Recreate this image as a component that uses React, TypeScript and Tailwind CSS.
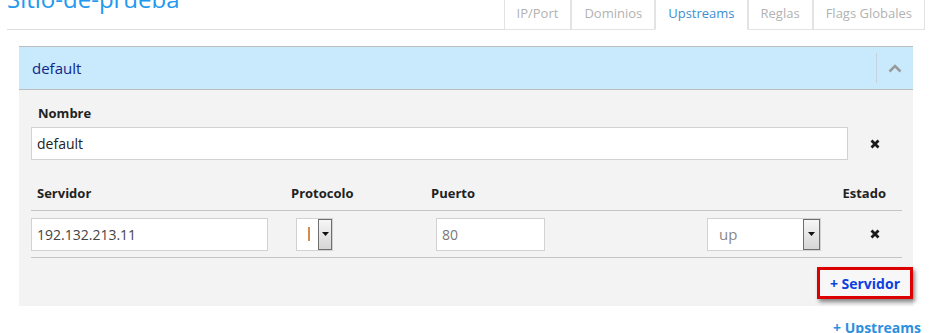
import React from "react";

const font = { fontFamily: '"Open Sans", "Liberation Sans", sans-serif' };

function XIcon() {
  return (
    <svg width="10" height="10" viewBox="0 0 10 10">
      <path d="M1.5 1.5 L8.5 8.5 M8.5 1.5 L1.5 8.5" stroke="#1a1a1a" strokeWidth="2.8" strokeLinecap="butt" />
    </svg>
  );
}

function DropBtn() {
  return (
    <div className="flex h-[31px] w-[17px] items-start justify-center border border-[#6e6e6e] bg-gradient-to-b from-[#f6f6f6] to-[#d6d6d6] pt-[12px]">
      <svg width="7" height="4" viewBox="0 0 7 4">
        <polygon points="0,0 7,0 3.5,4" fill="#111" />
      </svg>
    </div>
  );
}

function Tab({ label, active }: { label: string; active?: boolean }) {
  return (
    <div
      className={
        "mb-[-1px] flex h-[38px] items-center border border-[#e3e3e3] px-[12px] pt-[5px] text-[13px] " +
        (active
          ? "border-b-white bg-white text-[#3d8fd1]"
          : "border-b-[#e3e3e3] text-[#b2b2b2]")
      }
    >
      {label}
    </div>
  );
}

export default function App() {
  return (
    <div className="h-[333px] w-[932px] overflow-hidden bg-white" style={font}>
      <div className="ml-[7px] w-[918px]">
        {/* title + tabs */}
        <div className="flex h-[30px] items-end border-b border-[#dedede]">
          <div className="mb-auto mt-[-16px] text-[24px] leading-[30px] text-[#2299ee]">
            Sitio-de-prueba
          </div>
          <div className="ml-auto flex">
            <Tab label="IP/Port" />
            <Tab label="Dominios" />
            <Tab label="Upstreams" active />
            <Tab label="Reglas" />
            <Tab label="Flags Globales" />
          </div>
        </div>

        {/* panel */}
        <div className="mx-[12px] mt-[16px]">
          <div className="flex h-[44px] items-center border-y border-[#bdbdbd] bg-[#c8eafc]">
            <div className="flex-1 pl-[13px] text-[15px] text-[#10268a]">default</div>
            <div className="h-[30px] w-px bg-[#c3d3de]" />
            <div className="flex w-[36px] justify-center">
              <svg width="14" height="9" viewBox="0 0 14 9">
                <polyline points="1.5,7.5 7,2 12.5,7.5" fill="none" stroke="#9a9a9a" strokeWidth="2.6" />
              </svg>
            </div>
          </div>

          <div className="bg-[#f3f3f3] pb-[7px] pl-[12px] pr-[11px] pt-[14px]">
            <div className="pl-[7px] text-[13px] font-bold leading-[18px] text-[#222]">Nombre</div>
            <div className="mt-[5px] flex items-center">
              <div className="flex h-[33px] flex-1 items-center border border-[#d2d2d2] bg-white pl-[5px] text-[14px] text-[#222]">
                default
              </div>
              <div className="flex w-[54px] justify-center">
                <XIcon />
              </div>
            </div>

            {/* table header */}
            <div className="mt-[18px] flex h-[33px] items-center border-b border-[#c4c4c4] text-[13px] font-bold text-[#222]">
              <div className="w-[260px] pl-[6px]">Servidor</div>
              <div className="w-[140px]">Protocolo</div>
              <div className="flex-1">Puerto</div>
              <div className="pr-[16px]">Estado</div>
            </div>

            {/* table row */}
            <div className="flex h-[47px] items-center border-b border-[#c4c4c4]">
              <div className="w-[260px]">
                <div className="flex h-[33px] w-[237px] items-center border border-[#d2d2d2] bg-white pl-[5px] text-[14px] text-[#444]">
                  192.132.213.11
                </div>
              </div>
              <div className="w-[140px]">
                <div className="ml-[5px] flex h-[33px] w-[37px] items-center border border-[#d2d2d2] bg-white">
                  <div className="ml-[11px] mr-[8px] flex h-[14px]">
                    <span className="w-px bg-[#d58a4e]" />
                    <span className="w-px bg-[#7a9fd8]" />
                  </div>
                  <DropBtn />
                </div>
              </div>
              <div className="flex-1">
                <div className="ml-[5px] flex h-[33px] w-[109px] items-center border border-[#d2d2d2] bg-white pl-[5px] text-[14px] text-[#777]">
                  80
                </div>
              </div>
              <div className="mr-[27px] flex h-[33px] w-[114px] items-center border border-[#d2d2d2] bg-white">
                <div className="flex-1 pl-[11px] text-[15px] text-[#888]">up</div>
                <DropBtn />
              </div>
              <div className="flex w-[54px] justify-center">
                <XIcon />
              </div>
            </div>

            {/* add server */}
            <div className="mr-[-11px] mt-[9px] flex justify-end">
              <div className="flex h-[32px] items-center border-[3px] border-[#dd0000] bg-[#f7f7f7] px-[10px] text-[14px] font-bold text-[#0b3fe0] shadow-[2px_3px_4px_rgba(0,0,0,0.45)]">
                + Servidor
              </div>
            </div>
          </div>
        </div>

        <div className="mt-[12px] flex justify-end pr-[4px] text-[14px] font-bold leading-[20px] text-[#2d8fe0]">
          + Upstreams
        </div>
      </div>
    </div>
  );
}
